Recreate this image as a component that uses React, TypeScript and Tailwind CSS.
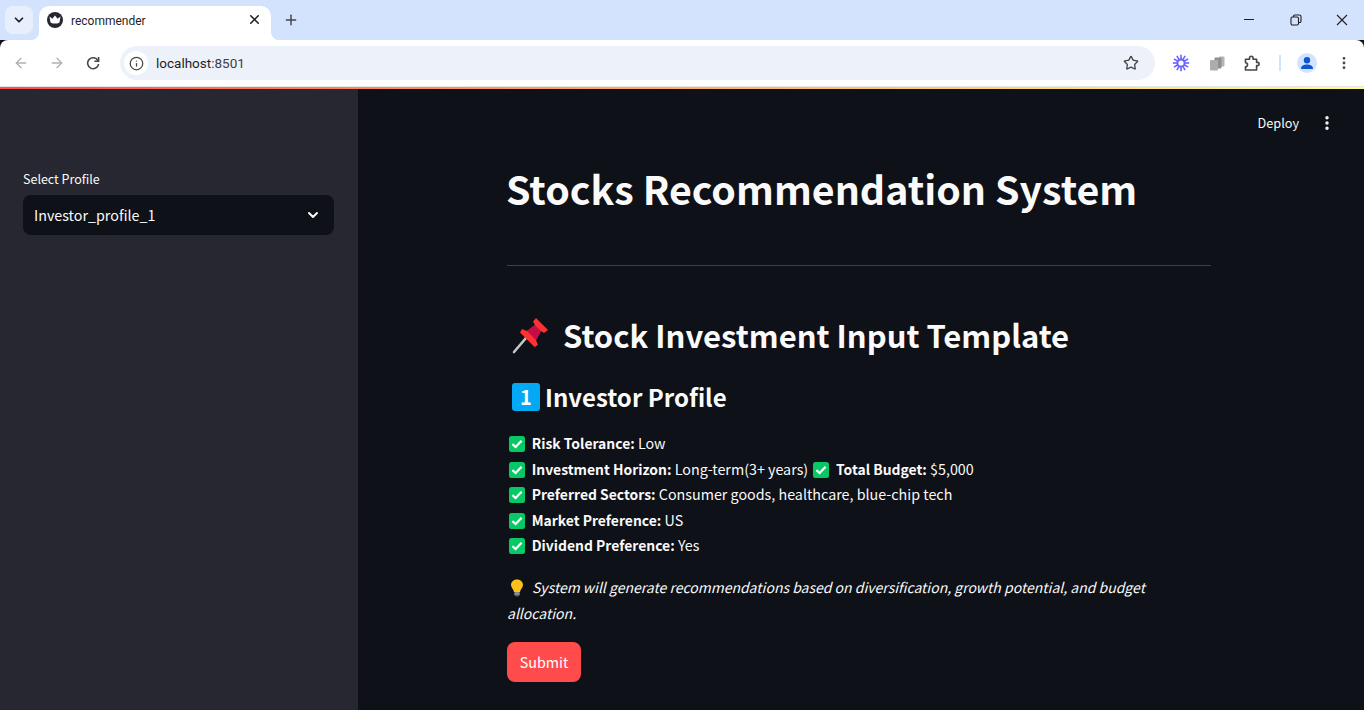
import React from 'react';
import { ChevronDown, X, Plus, ArrowLeft, ArrowRight, Info, Star, EllipsisVertical } from 'lucide-react';

const SANS = "font-['Noto_Sans_CJK_SC','Noto_Sans',sans-serif]";

const CheckEmoji: React.FC = () => (
  <svg width="16" height="16" viewBox="0 0 16 16" className="inline-block align-[-3px] ml-[2px] mr-[3.5px]">
    <rect width="16" height="16" rx="2.5" fill="#06c966" />
    <path d="M3.4 8.2 L6.6 11 L12.6 4.8" fill="none" stroke="#fff" strokeWidth="2.2" />
  </svg>
);

const PinEmoji: React.FC = () => (
  <svg width="38" height="38" viewBox="0 0 38 38">
    <path d="M2 36 L14 22" stroke="#c4c8cc" strokeWidth="2.6" strokeLinecap="round" />
    <path d="M24 2 L36 14 L32 17 L29 15 L24 24 L26 29 L22.5 31 L8 16.5 L10 13 L15 15 L23 9 L21 5.5 Z" fill="#ff3131" />
    <path d="M23 9 L29 15 L24 24 L15 15 Z" fill="#c60c46" />
  </svg>
);

const KeycapOne: React.FC = () => (
  <span className="w-[28px] h-[28px] rounded-[3px] bg-[#03a9f4] flex items-center justify-center text-white text-[20px] leading-none font-bold">
    1
  </span>
);

const BulbEmoji: React.FC = () => (
  <svg width="14" height="18" viewBox="0 0 14 18" className="inline-block align-[0px] -my-[4px]">
    <path d="M7 0.5 C3.2 0.5 1 3 1 6 C1 8.8 3.6 10 4 13 L10 13 C10.4 10 13 8.8 13 6 C13 3 10.8 0.5 7 0.5 Z" fill="#fcc21b" />
    <rect x="4.2" y="13" width="5.6" height="3.4" rx="1" fill="#8a8a8a" />
    <rect x="5.4" y="16" width="3.2" height="1.6" rx="0.8" fill="#5f5f5f" />
  </svg>
);

const CrownFavicon: React.FC = () => (
  <span className="w-4 h-4 rounded-full bg-[#262730] flex items-center justify-center">
    <svg width="12" height="10" viewBox="0 0 12 10">
      <path d="M0.5 1.5 L3.4 3.8 L6 0.5 L8.6 3.8 L11.5 1.5 L10.5 7.4 Q6 9.8 1.5 7.4 Z" fill="#fff" />
    </svg>
  </span>
);

const spokes = [0, 30, 60, 90, 120, 150, 180, 210, 240, 270, 300, 330];

const Asterisk: React.FC = () => (
  <svg width="18" height="18" viewBox="0 0 18 18" stroke="#6c63ff" strokeWidth="1.6">
    <circle cx="9" cy="9" r="3.6" fill="none" strokeWidth="2" />
    {spokes.map((deg) => (
      <path key={deg} d="M9 0.8 V5.4" transform={`rotate(${deg} 9 9)`} />
    ))}
  </svg>
);

const CopyStack: React.FC = () => (
  <svg width="16" height="15" viewBox="0 0 16 15">
    <rect x="10" y="0.5" width="5.5" height="10" rx="1" fill="#b4b4b4" />
    <rect x="5.5" y="1.5" width="7" height="11" rx="1" fill="#8f8f8f" />
    <rect x="1" y="4" width="8" height="10.5" rx="1" fill="#adadad" />
  </svg>
);

const ChromePuzzle: React.FC = () => (
  <svg width="17" height="17" viewBox="0 0 17 17" fill="none" stroke="#444746" strokeWidth="1.6" strokeLinejoin="round">
    <path d="M1.5 4.2 H5.5 V3 A1.8 1.8 0 0 1 9.1 3 V4.2 H12.6 V7.4 H13.6 A1.6 1.6 0 0 1 13.6 10.6 H12.6 V15 H1.5 V11.8 A2 2 0 0 0 1.5 7.8 Z" />
  </svg>
);

const Reload: React.FC = () => (
  <svg width="14" height="14" viewBox="0 0 14 14" fill="none" stroke="#444746" strokeWidth="1.6">
    <path d="M12 4.6 A5.5 5.5 0 1 0 12.6 8" />
    <path d="M12.6 1 V5.2 H8.4" />
  </svg>
);

const ListItem: React.FC<{ label: string; value: string }> = ({ label, value }) => (
  <>
    <CheckEmoji /> <strong className="font-bold text-[13.9px]">{label}</strong> {value}
  </>
);

export default function App() {
  return (
    <div className={`w-[1364px] h-[710px] overflow-hidden flex flex-col bg-[#0e1117] ${SANS}`}>
      {/* browser chrome */}
      <div className="h-[40px] bg-[#d3e3fd] flex items-end shrink-0 font-['Roboto',sans-serif]">
        <div className="ml-[5px] mb-[6px] w-[28px] h-[28px] rounded-[8px] bg-[#e8effc] flex items-center justify-center">
          <ChevronDown size={14} strokeWidth={3} className="text-[#1f1f1f]" />
        </div>
        <div className="relative ml-[6px] w-[232px] h-[34px] bg-white rounded-t-[10px] flex items-start pt-[6px] pl-[8px] pr-[9px]">
          <span className="absolute bottom-0 -left-[8px] w-[8px] h-[8px] bg-[radial-gradient(circle_at_0_0,#d3e3fd_7.5px,#ffffff_8.5px)]" />
          <span className="absolute bottom-0 -right-[8px] w-[8px] h-[8px] bg-[radial-gradient(circle_at_100%_0,#d3e3fd_7.5px,#ffffff_8.5px)]" />
          <CrownFavicon />
          <span className="ml-[8px] mt-[1px] text-[12px] leading-[16px] text-[#1f1f1f] flex-1">recommender</span>
          <X size={15} strokeWidth={2.5} className="text-[#1f1f1f]" />
        </div>
        <Plus size={16} strokeWidth={2.2} className="ml-[12px] mb-[12px] text-[#444746]" />
        <div className="flex-1" />
        <div className="flex items-center mb-[6px] h-[28px] text-[#1f1f1f]">
          <div className="w-[10px] h-px bg-[#1f1f1f] -mt-[1px]" />
          <svg width="12" height="12" viewBox="0 0 12 12" fill="none" stroke="#1f1f1f" strokeWidth="1.1" className="ml-[36px]">
            <rect x="1" y="3" width="7.5" height="8" rx="1.4" />
            <path d="M3.4 3 V2.4 A1.4 1.4 0 0 1 4.8 1 H9.4 A1.6 1.6 0 0 1 11 2.6 V7 A1.4 1.4 0 0 1 9.6 8.5 H8.5" />
          </svg>
          <svg width="12" height="12" viewBox="0 0 12 12" stroke="#1f1f1f" strokeWidth="1.1" className="ml-[34px] mr-[16px]">
            <path d="M1 1 L11 11 M11 1 L1 11" />
          </svg>
        </div>
      </div>
      <div className="h-[46px] bg-white rounded-t-[8px] flex items-center shrink-0 font-['Roboto',sans-serif]">
        <ArrowLeft size={16} className="ml-[13px] text-[#b0b1b2]" />
        <ArrowRight size={16} className="ml-[20px] text-[#b0b1b2]" />
        <span className="ml-[21px]"><Reload /></span>
        <div className="ml-[20px] w-[1035px] h-[34px] rounded-full bg-[#edf2fa] flex items-center pl-[4px] pr-[16px]">
          <span className="w-[24px] h-[24px] rounded-full bg-white flex items-center justify-center">
            <Info size={15} strokeWidth={2} className="text-[#444746]" />
          </span>
          <span className="ml-[8px] text-[13.5px] text-[#1f1f1f] flex-1">
            localhost<span className="text-[#3c4043]">:8501</span>
          </span>
          <Star size={16} strokeWidth={2} className="text-[#444746]" />
        </div>
        <span className="ml-[17px]"><Asterisk /></span>
        <span className="ml-[19px]"><CopyStack /></span>
        <span className="ml-[19px]"><ChromePuzzle /></span>
        <div className="ml-[18px] w-[2px] h-[16px] bg-[#d3e3fd]" />
        <span className="ml-[16px] w-[20px] h-[20px] rounded-full bg-[#d3e3fd] flex items-center justify-center">
          <svg width="14" height="14" viewBox="0 0 14 14" fill="#0b57d0">
            <circle cx="7" cy="4.2" r="3.2" />
            <path d="M1 13 C1 9.5 4 8.6 7 8.6 S13 9.5 13 13 Z" />
          </svg>
        </span>
        <EllipsisVertical size={16} strokeWidth={2.2} className="ml-[19px] text-[#444746]" />
      </div>
      <div className="h-px shrink-0 bg-[#e6e6e6]" />
      <div className="h-[2px] shrink-0 bg-gradient-to-r from-[#ff4b4b] to-[#fffd80]" />

      {/* streamlit page */}
      <div className="flex-1 flex min-h-0 relative">
        <aside className="w-[358px] shrink-0 bg-[#262730] pt-[80px] px-[23px]">
          <div className="text-[12.5px] leading-[20px] text-[#fafafa] mb-[6px]">Select Profile</div>
          <div className="w-[311px] h-[40px] rounded-[8px] bg-[#0e1117] flex items-center justify-between pl-[11px] pr-[13px]">
            <span className="text-[14.3px] text-[#fafafa]">Investor_profile_1</span>
            <ChevronDown size={16} strokeWidth={3} className="text-[#fafafa]" />
          </div>
        </aside>
        <main className="flex-1 pl-[149px] text-[#fafafa]">
          <div className="w-[704px]">
            <h1 className="mt-[70px] -ml-[1px] text-[39.35px] leading-[57px] font-bold">Stocks Recommendation System</h1>
            <hr className="mt-[49px] border-0 h-px bg-[#3d4044]" />
            <h2 className="mt-[44px] h-[50px] flex items-center text-[31px] leading-[50px] font-semibold">
              <span className="ml-[5px] mr-[13px]"><PinEmoji /></span>
              Stock Investment Input Template
            </h2>
            <h3 className="mt-[17px] h-[40px] flex items-center text-[24px] leading-[40px] font-semibold">
              <span className="ml-[5px] mr-[5px]"><KeycapOne /></span>
              Investor Profile
            </h3>
            <div className="mt-[13px] text-[14.3px] leading-[25.6px]">
              <div className="h-[25.6px]"><ListItem label="Risk Tolerance:" value="Low" /></div>
              <div className="h-[25.6px]"><ListItem label="Investment Horizon:" value="Long-term(3+ years)" /> <ListItem label="Total Budget:" value="$5,000" /></div>
              <div className="h-[25.6px]"><ListItem label="Preferred Sectors:" value="Consumer goods, healthcare, blue-chip tech" /></div>
              <div className="h-[25.6px]"><ListItem label="Market Preference:" value="US" /></div>
              <div className="h-[25.6px]"><ListItem label="Dividend Preference:" value="Yes" /></div>
            </div>
            <p className="mt-[17px] text-[14px] leading-[25.6px] italic">
              <span className="ml-[3px] mr-[8px]"><BulbEmoji /></span>
              System will generate recommendations based on diversification, growth potential, and budget allocation.
            </p>
            <button className="mt-[16px] w-[74px] h-[40px] rounded-[8px] bg-[#ff4b4b] text-[14.3px] text-white">Submit</button>
          </div>
        </main>
        <div className="absolute top-[24px] right-[28px] flex items-center text-[12.7px] text-[#fafafa]">
          <span>Deploy</span>
          <EllipsisVertical size={18} strokeWidth={2.6} className="ml-[19px]" />
        </div>
      </div>
    </div>
  );
}
